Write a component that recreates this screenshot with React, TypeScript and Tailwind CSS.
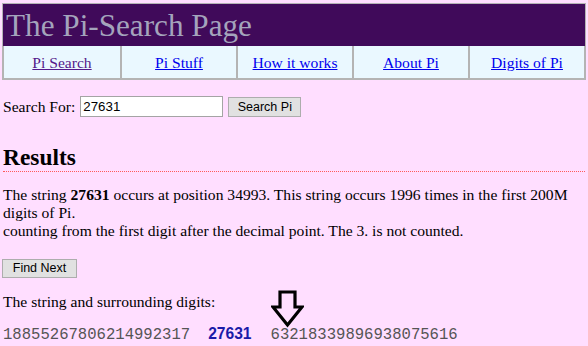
const navLinks = [
  { label: "Pi Search", visited: true },
  { label: "Pi Stuff", visited: false },
  { label: "How it works", visited: false },
  { label: "About Pi", visited: false },
  { label: "Digits of Pi", visited: false },
];

const DownArrow = () => (
  <svg width="33" height="39" viewBox="0 0 33 39" className="absolute left-[268px] top-[-35px]">
    <polygon
      points="9,2 24,2 24,17 31,17 16.5,35 2,17 9,17"
      fill="none"
      stroke="#000"
      strokeWidth="3.2"
      strokeLinejoin="miter"
    />
  </svg>
);

export default function App() {
  return (
    <div
      className="min-h-screen bg-[#ffdeff] text-[15.6px] text-black"
      style={{ fontFamily: '"Liberation Serif", "Times New Roman", serif' }}
    >
      <div className="px-[2px] pt-[3px]">
        {/* 상단 타이틀 */}
        <div className="h-[43px] border border-[#b4b4b4] border-b-0 bg-[#400a5a] pl-[3px] pt-[4px]">
          <h1 className="text-[31.2px] leading-[36px] text-[#a4a4bc]">The Pi-Search Page</h1>
        </div>

        {/* 메뉴 */}
        <nav className="grid h-[34px] grid-cols-5 border-2 border-t-0 border-[#b4b4b4] bg-[#eaf8ff]">
          {navLinks.map((link, i) => (
            <div
              key={link.label}
              className={`flex items-center justify-center pt-[1px] ${i > 0 ? "border-l-2 border-[#b4b4b4]" : ""}`}
            >
              <a
                href="#"
                className={`underline ${link.visited ? "text-[#551a8b]" : "text-[#0000ee]"}`}
              >
                {link.label}
              </a>
            </div>
          ))}
        </nav>
      </div>

      <div className="px-[3px]">
        {/* 검색 */}
        <form className="mt-[16px] flex h-[21px] items-center">
          <span>Search For:</span>
          <input
            className="ml-[5px] h-[21px] w-[143px] border border-[#a4a4a4] bg-white px-[2px] text-[13.3px] text-black outline-none"
            style={{ fontFamily: '"Liberation Sans", Arial, sans-serif' }}
            defaultValue="27631"
          />
          <button
            type="button"
            className="ml-[5px] h-[20px] w-[73px] border border-[#adadad] bg-[#e1e1e1] text-[12.5px] text-black"
            style={{ fontFamily: '"Liberation Sans", Arial, sans-serif' }}
          >
            Search Pi
          </button>
        </form>

        <h2 className="mt-[27px] border-b border-dotted border-[#ff5a5a] text-[23.4px] leading-[27px] font-bold">
          Results
        </h2>

        <p className="mt-[14px] leading-[18px]">
          The string <b>27631</b> occurs at position 34993. This string occurs 1996 times in the first 200M
          digits of Pi.
          <br />
          counting from the first digit after the decimal point. The 3. is not counted.
        </p>

        <button
          type="button"
          className="mt-[19px] ml-[-1px] h-[19px] w-[75px] border border-[#adadad] bg-[#e1e1e1] text-[12.5px] leading-none text-black"
          style={{ fontFamily: '"Liberation Sans", Arial, sans-serif' }}
        >
          Find Next
        </button>

        <p className="mt-[14px] leading-[18px]">The string and surrounding digits:</p>

        <div className="relative mt-[14px]">
          <DownArrow />
          <div
            className="flex items-baseline text-[15.6px] leading-[18px] text-[#555555]"
            style={{ fontFamily: '"Liberation Mono", "Courier New", monospace' }}
          >
            <span>18855267806214992317</span>
            <span
              className="ml-[18px] mr-[19px] font-bold text-[#1a1aa8]"
              style={{ fontFamily: '"Liberation Sans", Arial, sans-serif' }}
            >
              27631
            </span>
            <span>63218339896938075616</span>
          </div>
        </div>
      </div>
    </div>
  );
}
